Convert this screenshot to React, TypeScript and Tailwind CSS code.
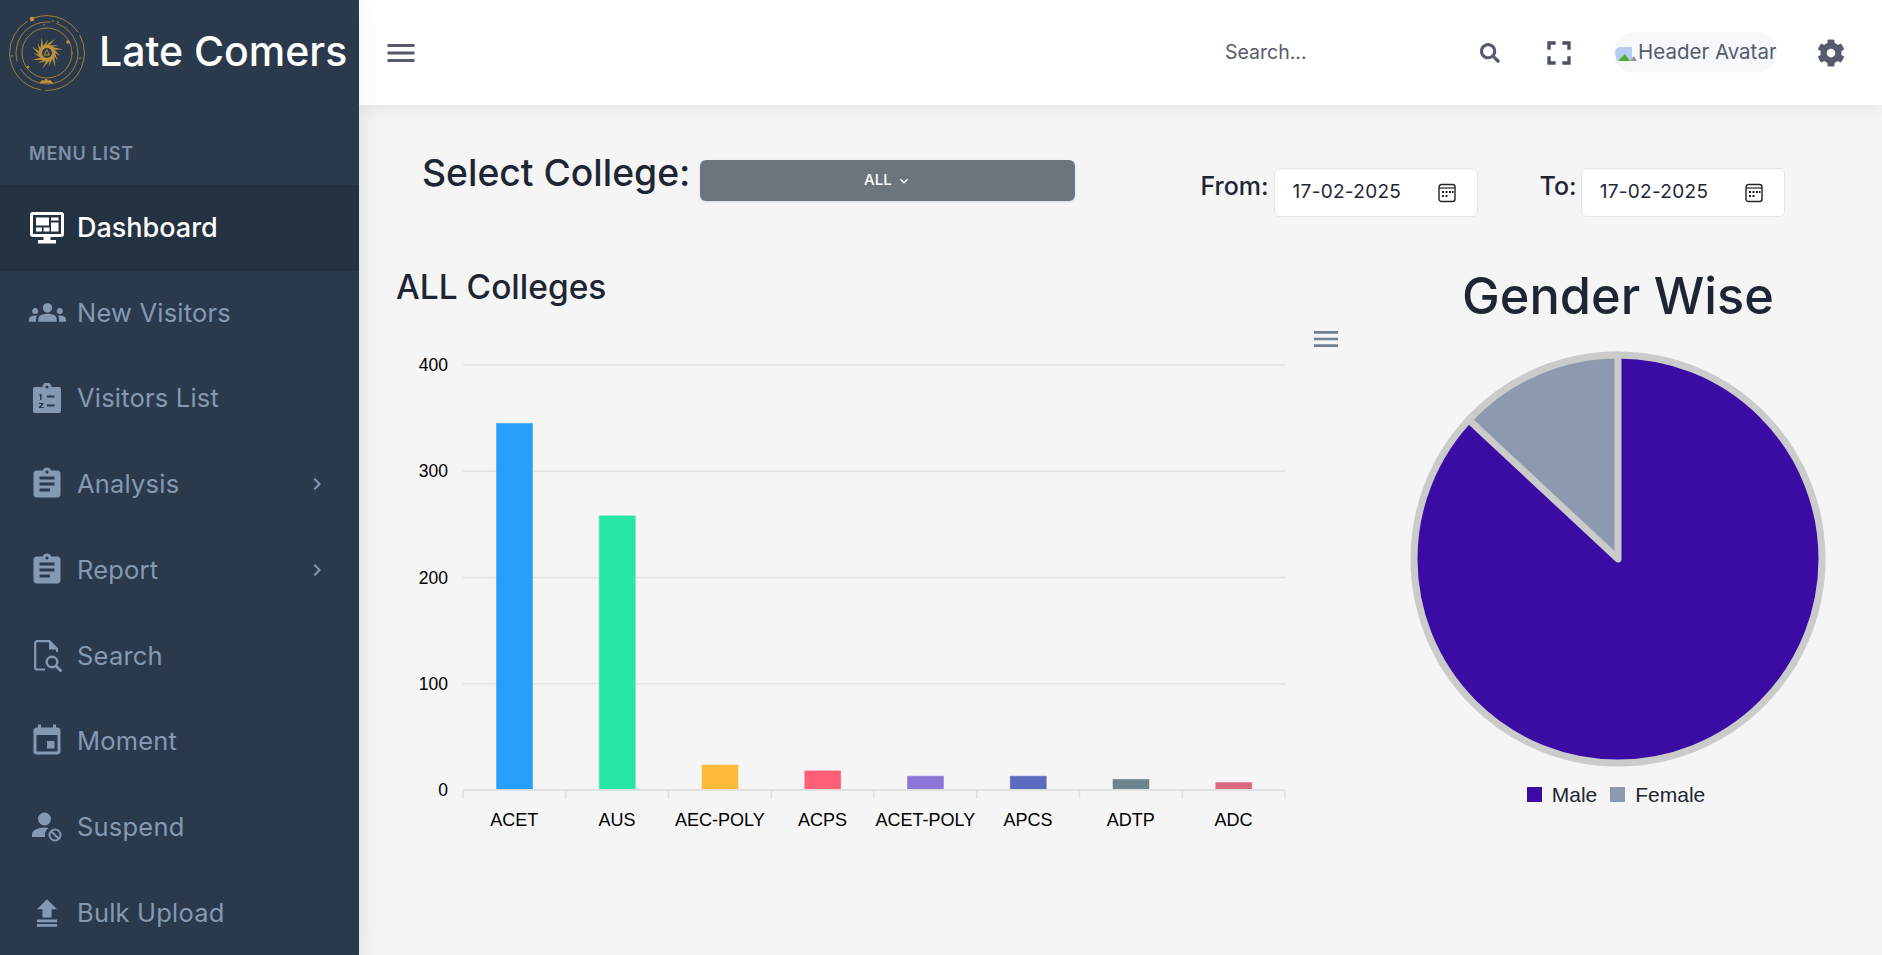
import {FaSearch, FaCog} from "react-icons/fa";
import {
 MdMenu,
 MdGroups,
 MdAssignment,
 MdEvent,
 MdFullscreen,
 MdChevronRight,
 MdKeyboardArrowDown,
} from "react-icons/md";

const poppins = "font-['Inter','Noto_Sans',sans-serif]";

function DashIcon({className}: {className?: string}) {
 return (
  <svg viewBox="0 0 34 32" className={className} fill="currentColor">
   <path
    fillRule="evenodd"
    d="M3 0h28a3 3 0 0 1 3 3v19a3 3 0 0 1-3 3H3a3 3 0 0 1-3-3V3a3 3 0 0 1 3-3Zm0 3v19h28V3Z"
   />
   <path d="M6 5.5h13v8H6ZM21 5.5h7.500v3H21ZM21 10.500h7.500v9H21ZM6 15.500h6v4H6ZM13.500 15.500h6v4h-6Z" />
   <path d="M13.500 25h7v3H26v3.500H8V28h5.500Z" />
  </svg>
 );
}

function ListIcon({className}: {className?: string}) {
 return (
  <svg viewBox="0 0 28 30" className={className} fill="currentColor">
   <path
    fillRule="evenodd"
    d="M2 4h7.500a4.500 4.500 0 0 1 9 0H26a2 2 0 0 1 2 2v22a2 2 0 0 1-2 2H2a2 2 0 0 1-2-2V6a2 2 0 0 1 2-2Zm12-1.500a1.500 1.500 0 1 0 0 3 1.500 1.500 0 0 0 0-3ZM14 12.500v2h7.500v-2Zm0 9v2h7.500v-2Z"
   />
   <path d="M7 11h1.500v6H7v-4.500H6ZM6 20h4.500v1.200L7.800 24h2.700v1H6v-1.200L8.700 21H6Z" fill="#2a3a4c" />
  </svg>
 );
}

function FileSearchIcon({className}: {className?: string}) {
 return (
  <svg viewBox="0 0 29 32" className={className} fill="none" stroke="currentColor" strokeWidth="2.200">
   <path d="M11 29.500H3a1.800 1.800 0 0 1-1.800-1.800V3A1.800 1.800 0 0 1 3 1.200h12.500L23 9v3" />
   <path d="M15 1.500h1L23.500 9.500H15Z" fill="currentColor" stroke="none" />
   <circle cx="18" cy="22" r="5.300" strokeWidth="2.400" />
   <path d="M22 26l5.500 5.500" strokeWidth="2.800" />
  </svg>
 );
}

function SuspendIcon({className}: {className?: string}) {
 return (
  <svg viewBox="0 0 30 30" className={className} fill="currentColor">
   <circle cx="12.500" cy="7" r="6.500" />
   <path d="M0 25v-3c0-3.500 6-6.500 12.500-6.500 1.500 0 3 .2 4.300.5A9 9 0 0 0 13 25Z" />
   <circle cx="23" cy="23" r="5.500" fill="none" stroke="currentColor" strokeWidth="2" />
   <path d="M19.500 19.500l7 7" stroke="currentColor" strokeWidth="2" />
  </svg>
 );
}

function UploadIcon({className}: {className?: string}) {
 return (
  <svg viewBox="0 0 24 32" className={className} fill="currentColor">
   <path d="M12 1 23 12h-6v9H7v-9H1ZM1 23h22v3H1ZM1 28h22v3H1Z" />
  </svg>
 );
}

function CalendarIcon() {
 return (
  <svg viewBox="0 0 18 20" className="w-[18px] h-5" fill="none" stroke="#222">
   <rect x="1" y="1.500" width="16" height="17" rx="2.500" strokeWidth="1.400" />
   <path d="M1 5h16" strokeWidth="1.200" />
   <g fill="#222" stroke="none">
    <rect x="4" y="8" width="2" height="2" />
    <rect x="7.500" y="8" width="2" height="2" />
    <rect x="11" y="8" width="2" height="2" />
    <rect x="14" y="8" width="1.500" height="2" />
    <rect x="4" y="12" width="2" height="2" />
    <rect x="7.500" y="12" width="2" height="2" />
   </g>
  </svg>
 );
}

// curved spiky sun in the middle of the logo
function sunPoints() {
 const pts: string[] = [];
 const n = 15;
 for (let i = 0; i < n; i++) {
  const a = (i / n) * Math.PI * 2;
  const outer = i % 2 ? 16.5 : 13.5;
  pts.push(`${38 + 8 * Math.cos(a)},${38 + 8 * Math.sin(a)}`);
  const b = a + 0.42 + 0.2;
  pts.push(`${38 + outer * Math.cos(b)},${38 + outer * Math.sin(b)}`);
 }
 return pts.join(" ");
}

function Logo() {
 return (
  <svg viewBox="0 0 76 76" className="w-[76px] h-[76px] shrink-0" fill="none" stroke="#bf9239" strokeLinecap="round">
   <circle cx="38" cy="38" r="37.400" strokeWidth="0.800" strokeDasharray="60 5 90 7 50 4" />
   <circle cx="38" cy="38" r="31" strokeWidth="0.800" strokeDasharray="80 9 60 7" />
   <circle cx="38" cy="38" r="25" strokeWidth="0.800" />
   <g fill="#bf9239" stroke="none">
    <circle cx="23" cy="4" r="2.200" />
    <circle cx="59" cy="27" r="1.800" />
    <circle cx="19" cy="52" r="1.300" />
    <circle cx="44" cy="6" r="0.800" />
    <circle cx="49" cy="7" r="0.800" />
    <circle cx="35" cy="10" r="0.800" />
    <circle cx="71" cy="43" r="0.800" />
    <circle cx="3" cy="41" r="0.800" />
    <path d="M31 68c1-3 3-4 4-2 1-3 3-3 4 0 1-2 3-1 5 2Z" />
    <polygon points={sunPoints()} />
   </g>
   <circle cx="38" cy="38" r="5" fill="#2a3a4c" stroke="none" />
   <path d="M38 35l2.500 5h-5Z" stroke="#bf9239" strokeWidth="1" />
  </svg>
 );
}

const menu = [
 {label: "Dashboard", Icon: DashIcon, size: "w-[34px] h-8", active: true},
 {label: "New Visitors", Icon: MdGroups, size: "w-[37px] h-[37px]"},
 {label: "Visitors List", Icon: ListIcon, size: "w-7 h-[30px]"},
 {label: "Analysis", Icon: MdAssignment, size: "w-9 h-9", arrow: true},
 {label: "Report", Icon: MdAssignment, size: "w-9 h-9", arrow: true},
 {label: "Search", Icon: FileSearchIcon, size: "w-[29px] h-8 ml-[3px]"},
 {label: "Moment", Icon: MdEvent, size: "w-9 h-9"},
 {label: "Suspend", Icon: SuspendIcon, size: "w-[30px] h-[30px]"},
 {label: "Bulk Upload", Icon: UploadIcon, size: "w-[22px] h-8"},
];

const bars = [
 {name: "ACET", value: 345, color: "#269ffb"},
 {name: "AUS", value: 258, color: "#26e7a6"},
 {name: "AEC-POLY", value: 23.5, color: "#febb3b"},
 {name: "ACPS", value: 18, color: "#ff6077"},
 {name: "ACET-POLY", value: 13, color: "#8b75d7"},
 {name: "APCS", value: 13, color: "#5b6bbf"},
 {name: "ADTP", value: 10, color: "#6d848e"},
 {name: "ADC", value: 7, color: "#d9687f"},
];

function BarChart() {
 const left = 84;
 const step = 102.75;
 const base = 479;
 const unit = 106.25 / 100;
 return (
  <svg width="920" height="530" viewBox="0 0 920 530" className="block">
   {[1, 2, 3, 4].map((n) => (
    <line key={n} x1={left} x2={left + step * 8} y1={base - n * 106.25} y2={base - n * 106.25} stroke="#e2e2e2" strokeWidth="1.500" />
   ))}
   {[0, 100, 200, 300, 400].map((v) => (
    <text key={v} x="69" y={base - v * unit + 6} textAnchor="end" fontSize="17.5" fill="#000" fontFamily="Liberation Sans">
     {v}
    </text>
   ))}
   {bars.map((b, i) => (
    <g key={b.name}>
     <rect
      x={left + i * step + 33.5}
      y={base - b.value * unit}
      width="36"
      height={b.value * unit}
      fill={b.color}
      stroke={b.color}
      strokeOpacity="0.5"
     />
     <text
      x={left + i * step + step / 2}
      y={base + 36}
      textAnchor="middle"
      fontSize="18"
      fill="#000"
      fontFamily="Liberation Sans">
      {b.name}
     </text>
    </g>
   ))}
   <line x1={left} x2={left + step * 8} y1={base} y2={base} stroke="#e0e0e0" strokeWidth="2" />
   {Array.from({length: 9}).map((_, i) => (
    <line key={i} x1={left + i * step} x2={left + i * step} y1={base} y2={base + 9} stroke="#e0e0e0" strokeWidth="1.500" />
   ))}
  </svg>
 );
}

function PieChart() {
 const r = 204;
 const a = (47 * Math.PI) / 180;
 const x = 210 - r * Math.sin(a);
 const y = 210 - r * Math.cos(a);
 return (
  <svg width="420" height="420" viewBox="0 0 420 420" className="block">
   <circle cx="210" cy="210" r={r} fill="#3a0ca3" stroke="#cbcbcb" strokeWidth="7" />
   <path
    d={`M210 210 L${x} ${y} A${r} ${r} 0 0 1 210 ${210 - r} Z`}
    fill="#8d99ae"
    stroke="#cbcbcb"
    strokeWidth="7"
    strokeLinejoin="round"
   />
  </svg>
 );
}

function DateBox() {
 return (
  <div className="flex items-center justify-between w-[204px] h-[49px] px-[18px] pr-[21px] bg-white border border-[#e2e5ea] rounded-md text-[19px] tracking-[0.3px] text-[#1e2533]">
   <span>17-02-2025</span>
   <CalendarIcon />
  </div>
 );
}

export default function App() {
 return (
  <div className={`flex h-[955px] w-[1882px] overflow-hidden bg-[#f5f5f5] ${poppins}`}>
   <aside className="w-[359px] shrink-0 bg-[#2a3a4c] flex flex-col z-20 shadow-[0_0_30px_rgba(0,0,0,0.06)]">
    <div className="h-[105px] shrink-0 flex items-center pl-[9px] gap-[14px]">
     <Logo />
     <span className="font-medium text-white text-[41px] leading-none mb-[2px] whitespace-nowrap">
      Late Comers
     </span>
    </div>
    <div className="h-[80px] shrink-0 flex items-end pb-[18px] pl-[29px] text-[18px] font-semibold tracking-[0.8px] text-[#7d90a8]">
     MENU LIST
    </div>
    <nav className="flex flex-col">
     {menu.map(({label, Icon, size, active, arrow}) => (
      <div
       key={label}
       className={`h-[85.75px] shrink-0 flex items-center relative ${active ? "bg-[#253241] text-white" : "pb-[2px] text-[#8499b2]"}`}>
       <span className="w-[77px] pl-[17px] flex items-center justify-center shrink-0">
        <Icon className={size} />
       </span>
       <span className={active ? "text-[27px] font-medium" : "text-[25.5px] tracking-[0.2px]"}>{label}</span>
       {arrow && <MdChevronRight className="absolute left-[305px] w-[24px] h-[24px]" />}
      </div>
     ))}
    </nav>
   </aside>
   <div className="flex-1 flex flex-col min-w-0">
    <header className="h-[105px] shrink-0 bg-white flex items-center shadow-[0_2px_20px_rgba(0,0,0,0.08)] z-10 text-[#555b6d]">
     <MdMenu className="w-[36px] h-[36px] ml-[24px]" />
     <span className="ml-[806px] text-[19.5px] w-[255px]">Search...</span>
     <FaSearch className="w-[20px] h-[20px]" />
     <MdFullscreen className="w-[40px] h-[40px] ml-[39px] text-[#4b5262]" />
     <div className="ml-[35px] w-[163px] h-[41px] rounded-full bg-[#f6f8fb] overflow-hidden flex items-center text-[20.5px] whitespace-nowrap">
      <svg viewBox="0 0 24 20" className="w-6 h-5 shrink-0">
       <path d="M1 10a6 6 0 0 1 7-6h10v14H3Z" fill="#b7cdf0" />
       <path d="M4 18l7-7 5 7Z" fill="#4fae30" />
       <path d="M16 18l4-5 3 5Z" fill="#8a9a8a" />
      </svg>
      Header Avatar
     </div>
     <FaCog className="w-[28px] h-[28px] ml-[40px]" />
    </header>
    <main className="flex-1 relative bg-[#f5f5f5] shadow-[inset_20px_0_20px_-20px_rgba(0,0,0,0.06)] text-[#1e2533]">
     <div className="flex items-start pl-[63px] pt-[55px]">
      <h2 className="text-[37.3px] font-medium leading-[26px] whitespace-nowrap">Select College:</h2>
      <div className="ml-[10px] w-[375px] h-[41px] bg-[#6c757d] rounded-md text-white text-[15px] font-medium flex items-center justify-center gap-1 shadow-sm">
       ALL
       <MdKeyboardArrowDown className="w-4 h-4" />
      </div>
      <div className="ml-[125px] mt-[8px] flex items-start">
       <span className="text-[25px] font-medium leading-[36px] mr-[5px]">From:</span>
       <DateBox />
       <span className="ml-[62px] text-[25px] font-medium leading-[36px] mr-[4px]">To:</span>
       <DateBox />
      </div>
     </div>
     <div className="flex mt-[46px]">
      <div className="pl-[37px] w-[954px] shrink-0">
       <h3 className="text-[33.5px] font-medium leading-[48px]">ALL Colleges</h3>
       <div className="ml-[-17px]">
        <BarChart />
       </div>
      </div>
      <MdMenu className="w-8 h-8 text-[#6e8192] ml-[-3px] mt-[60px]" />
      <div className="flex flex-col items-center ml-[66px] w-[420px] -mt-[5px]">
       <h2 className="text-[50.5px] font-medium leading-[75px]">Gender Wise</h2>
       <div className="mt-[16px]">
        <PieChart />
       </div>
       <div className="flex items-center mt-[10px] mr-[4px] font-['Liberation_Sans',sans-serif] text-[21px] text-[#1e2533]">
        <span className="w-[15px] h-[15px] bg-[#3a0ca3] mr-[10px]" />
        Male
        <span className="w-[15px] h-[15px] bg-[#8d99ae] ml-[13px] mr-[10px]" />
        Female
       </div>
      </div>
     </div>
    </main>
   </div>
  </div>
 );
}
